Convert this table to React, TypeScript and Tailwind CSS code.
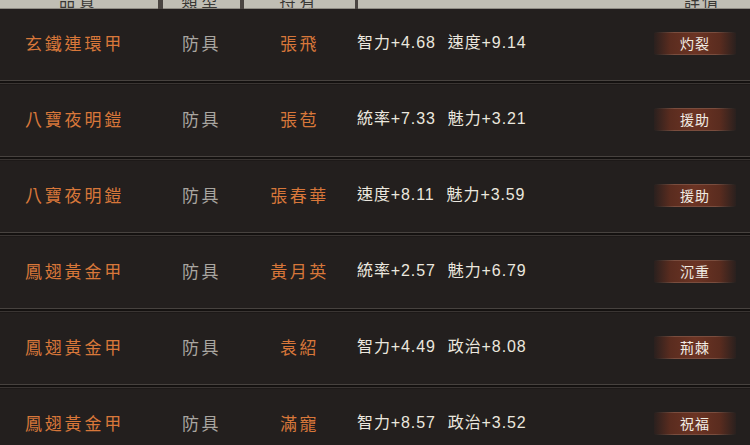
import React from "react";

type Row = {
  name: string;
  type: string;
  owner: string;
  stats: string[];
  trait: string;
};

const rows: Row[] = [
  { name: "玄鐵連環甲", type: "防具", owner: "張飛", stats: ["智力+4.68", "速度+9.14"], trait: "灼裂" },
  { name: "八寶夜明鎧", type: "防具", owner: "張苞", stats: ["統率+7.33", "魅力+3.21"], trait: "援助" },
  { name: "八寶夜明鎧", type: "防具", owner: "張春華", stats: ["速度+8.11", "魅力+3.59"], trait: "援助" },
  { name: "鳳翅黃金甲", type: "防具", owner: "黃月英", stats: ["統率+2.57", "魅力+6.79"], trait: "沉重" },
  { name: "鳳翅黃金甲", type: "防具", owner: "袁紹", stats: ["智力+4.49", "政治+8.08"], trait: "荊棘" },
  { name: "鳳翅黃金甲", type: "防具", owner: "滿寵", stats: ["智力+8.57", "政治+3.52"], trait: "祝福" },
];

const cjk = "font-['Noto_Sans_CJK_TC','Noto_Sans_CJK_SC',serif]";
const mixed = "font-['Liberation_Sans','Noto_Sans_CJK_TC',sans-serif]";

function HeaderCell({ label, className }: { label: string; className: string }) {
  return (
    <div className={`h-[9px] overflow-hidden bg-[#c0beb4] border-b border-[#8f8c84] flex justify-center ${className}`}>
      <span className={`-mt-[8px] text-[16px] leading-[16px] tracking-[4px] text-[#3a3834] ${cjk}`}>{label}</span>
    </div>
  );
}

function Badge({ text }: { text: string }) {
  return (
    <div className="w-[82px] flex flex-col">
      <div className="h-[1px] bg-[linear-gradient(90deg,transparent,#7a4d3e_25%,#7a4d3e_75%,transparent)]" />
      <div className="h-[21px] flex items-center justify-center bg-[linear-gradient(90deg,#2a201e_0%,#5a2c1f_20%,#6c3424_50%,#5a2c1f_80%,#2a201e_100%)]">
        <span className={`text-[14px] tracking-[1px] text-[#f1ece4] ${cjk}`}>{text}</span>
      </div>
      <div className="h-[1px] bg-[linear-gradient(90deg,transparent,#7a4d3e_25%,#7a4d3e_75%,transparent)]" />
    </div>
  );
}

export default function App() {
  return (
    <div className="w-[750px] h-[445px] overflow-hidden bg-[#231f1e]">
      <div className="flex bg-[#4a4541] gap-[3px]">
        <HeaderCell label="品質" className="w-[158px]" />
        <HeaderCell label="類型" className="w-[77px] ml-[2px]" />
        <HeaderCell label="持有" className="w-[111px] ml-[1px]" />
        <div className="flex-1 h-[9px] overflow-hidden bg-[#c0beb4] border-b border-[#8f8c84] flex justify-end pr-[30px]">
          <span className={`-mt-[8px] text-[16px] leading-[16px] tracking-[2px] text-[#3a3834] ${cjk}`}>詳情</span>
        </div>
      </div>

      {rows.map((r, i) => (
        <div key={i}>
          <div className="h-[71px] flex items-center pb-[3px]">
            <div className={`w-[163px] pl-[25px] text-[17px] tracking-[2.8px] text-[#d8773a] ${cjk}`}>{r.name}</div>
            <div className={`w-[79px] pl-[19px] text-[17px] tracking-[2.5px] text-[#a9a6a1] ${cjk}`}>{r.type}</div>
            <div className={`w-[115px] text-center text-[17px] tracking-[2.5px] text-[#d8773a] ${cjk}`}>{r.owner}</div>
            <div className={`flex gap-[12px] text-[16px] tracking-[0.9px] text-[#ebe7df] ${mixed}`}>
              {r.stats.map((s) => (
                <span key={s}>{s}</span>
              ))}
            </div>
            <div className="ml-auto mr-[14px]">
              <Badge text={r.trait} />
            </div>
          </div>
          <div className="h-[5px] flex flex-col">
            <div className="h-[1px] bg-[#47423f]" />
            <div className="h-[2px] bg-[#141110]" />
            <div className="h-[1px] bg-[#3a3533]" />
            <div className="h-[1px] bg-[#1d1918]" />
          </div>
        </div>
      ))}
    </div>
  );
}
